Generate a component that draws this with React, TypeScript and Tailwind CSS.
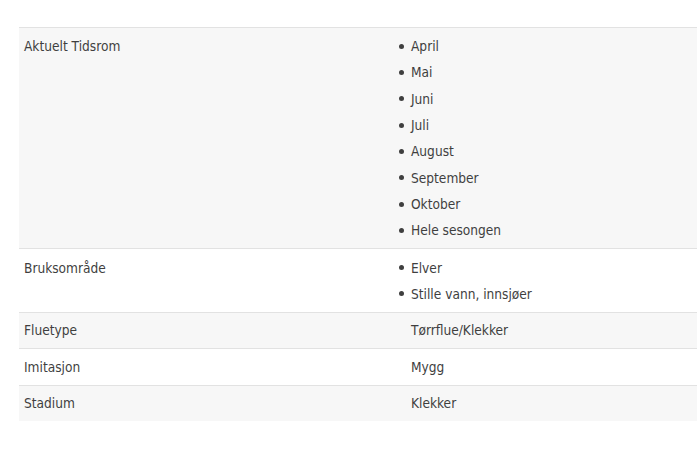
const ROWS: { label: string; items?: string[]; value?: string }[] = [
  {
    label: "Aktuelt Tidsrom",
    items: ["April", "Mai", "Juni", "Juli", "August", "September", "Oktober", "Hele sesongen"],
  },
  { label: "Bruksområde", items: ["Elver", "Stille vann, innsjøer"] },
  { label: "Fluetype", value: "Tørrflue/Klekker" },
  { label: "Imitasjon", value: "Mygg" },
  { label: "Stadium", value: "Klekker" },
];

export default function App() {
  return (
    <div
      className="h-[459px] w-[697px] overflow-hidden bg-white pt-[27px] text-[13.6px] leading-[26.3px] text-[#3f3f3f]"
      style={{ fontFamily: '"DejaVu Sans Condensed", "Liberation Sans Narrow", sans-serif' }}
    >
      <div className="ml-[19px] w-[720px] border-t border-[#e2e2e2]">
        {ROWS.map((row, i) => (
          <div
            key={row.label}
            className={`grid grid-cols-[367px_1fr] ${row.items ? "pt-[5.2px] pb-[4.8px]" : "py-[4.5px]"} ${
              i > 0 ? "border-t border-[#e2e2e2]" : ""
            } ${i % 2 === 0 ? "bg-[#f7f7f7]" : "bg-white"}`}
          >
            <div className="pl-[5px]">{row.label}</div>
            {row.items ? (
              <ul className="pl-[25px]">
                {row.items.map((item) => (
                  <li key={item} className="flex items-center">
                    <span className="mr-[7px] -ml-[12px] h-[5px] w-[5px] rounded-full bg-[#3f3f3f]" />
                    {item}
                  </li>
                ))}
              </ul>
            ) : (
              <div className="pl-[25px]">{row.value}</div>
            )}
          </div>
        ))}
      </div>
    </div>
  );
}
